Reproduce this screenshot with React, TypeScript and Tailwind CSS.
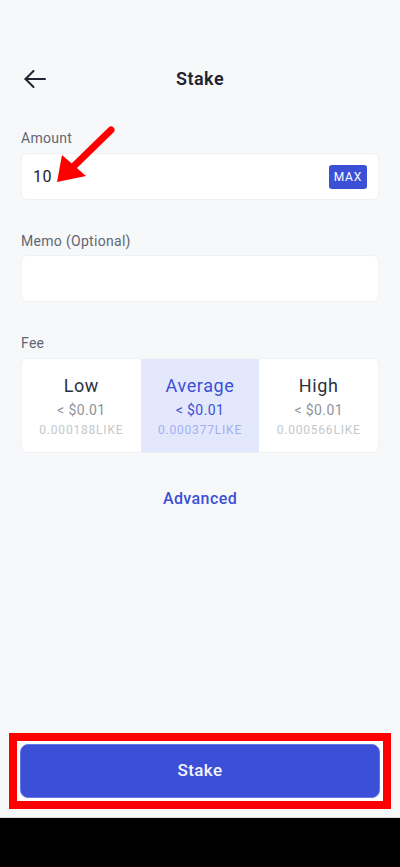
const fees = [
  { name: "Low", usd: "< $0.01", amount: "0.000188LIKE", active: false },
  { name: "Average", usd: "< $0.01", amount: "0.000377LIKE", active: true },
  { name: "High", usd: "< $0.01", amount: "0.000566LIKE", active: false },
];

export default function App() {
  return (
    <div
      className="relative flex min-h-[867px] w-[400px] flex-col bg-[#f7f8fa] text-[#1f2430]"
      style={{ fontFamily: "Roboto, 'Noto Sans', sans-serif" }}
    >
      <div className="flex flex-1 flex-col px-[21px] pt-[57px]">
        {/* header */}
        <div className="relative flex h-[44px] items-center justify-center">
          <button className="absolute left-[3px] top-[13px]">
            <svg width="22" height="18" viewBox="0 0 22 18" fill="none" stroke="#1f2430" strokeWidth="2" strokeLinecap="round" strokeLinejoin="round">
              <path d="M1.5 9H21" />
              <path d="M9.5 1L1.5 9l8 8" />
            </svg>
          </button>
          <h1 className="text-[18px] font-semibold leading-6 tracking-[0.5px]">Stake</h1>
        </div>

        <label className="mt-[27px] text-sm leading-5 tracking-[0.3px] text-[#5f6673]">Amount</label>
        <div className="mt-[5px] flex h-[47px] items-center justify-between rounded-[6px] border border-[#f0f1f4] bg-white pl-[11px] pr-[11px]">
          <span className="text-[16px] tracking-[0.5px] text-[#1f2430]">10</span>
          <span className="rounded-[3px] bg-[#3b50d6] px-[5px] py-[3px] text-[12px] leading-[18px] tracking-[0.8px] text-white">MAX</span>
        </div>

        <label className="mt-[31px] text-sm leading-5 tracking-[0.3px] text-[#5f6673]">Memo (Optional)</label>
        <div className="mt-[4px] h-[47px] rounded-[6px] border border-[#f0f1f4] bg-white" />

        <label className="mt-[31px] text-sm leading-5 tracking-[0.3px] text-[#5f6673]">Fee</label>
        <div className="mt-[5px] grid h-[95px] grid-cols-3 overflow-hidden rounded-[6px] border border-[#f0f1f4] bg-white">
          {fees.map((f) => (
            <div
              key={f.name}
              className={
                f.active
                  ? "flex flex-col items-center bg-[#e3e8fc] pt-[15px]"
                  : "flex flex-col items-center pt-[15px]"
              }
            >
              <span className={f.active ? "text-[18px] leading-6 tracking-[0.6px] text-[#3b50d6]" : "text-[18px] leading-6 tracking-[0.6px] text-[#2c3140]"}>
                {f.name}
              </span>
              <span className={f.active ? "mt-[2px] text-sm leading-5 tracking-[0.4px] text-[#3b50d6]" : "mt-[2px] text-sm leading-5 tracking-[0.4px] text-[#8e939b]"}>
                {f.usd}
              </span>
              <span className={f.active ? "mt-[2px] text-xs leading-4 tracking-[0.8px] text-[#a3aef0]" : "mt-[2px] text-xs leading-4 tracking-[0.8px] text-[#c4c7cd]"}>
                {f.amount}
              </span>
            </div>
          ))}
        </div>

        <button className="mt-[34px] self-center text-[16px] font-medium leading-6 tracking-[0.4px] text-[#3b50d6]">Advanced</button>

        <div className="flex-1" />

        {/* highlighted action */}
        <div className="mx-[-12px] mb-[8px] border-[8px] border-[#ff0000] bg-white p-[3px]">
          <button className="flex h-[54px] w-full items-center justify-center rounded-[8px] border border-[#6577e2] bg-[#3b50d6] text-[17px] font-medium tracking-[0.4px] text-[#f3f4ff]">
            Stake
          </button>
        </div>
      </div>

      <div className="h-[1px] bg-[#d9dbe0]" />
      <div className="h-[49px] bg-black" />

      {/* annotation arrow */}
      <svg className="pointer-events-none absolute left-0 top-0" width="400" height="867">
        <line x1="111" y1="130" x2="74" y2="166" stroke="#ff0000" strokeWidth="7" strokeLinecap="round" />
        <polygon points="57,182 62,155 86,176" fill="#ff0000" />
      </svg>
    </div>
  );
}
